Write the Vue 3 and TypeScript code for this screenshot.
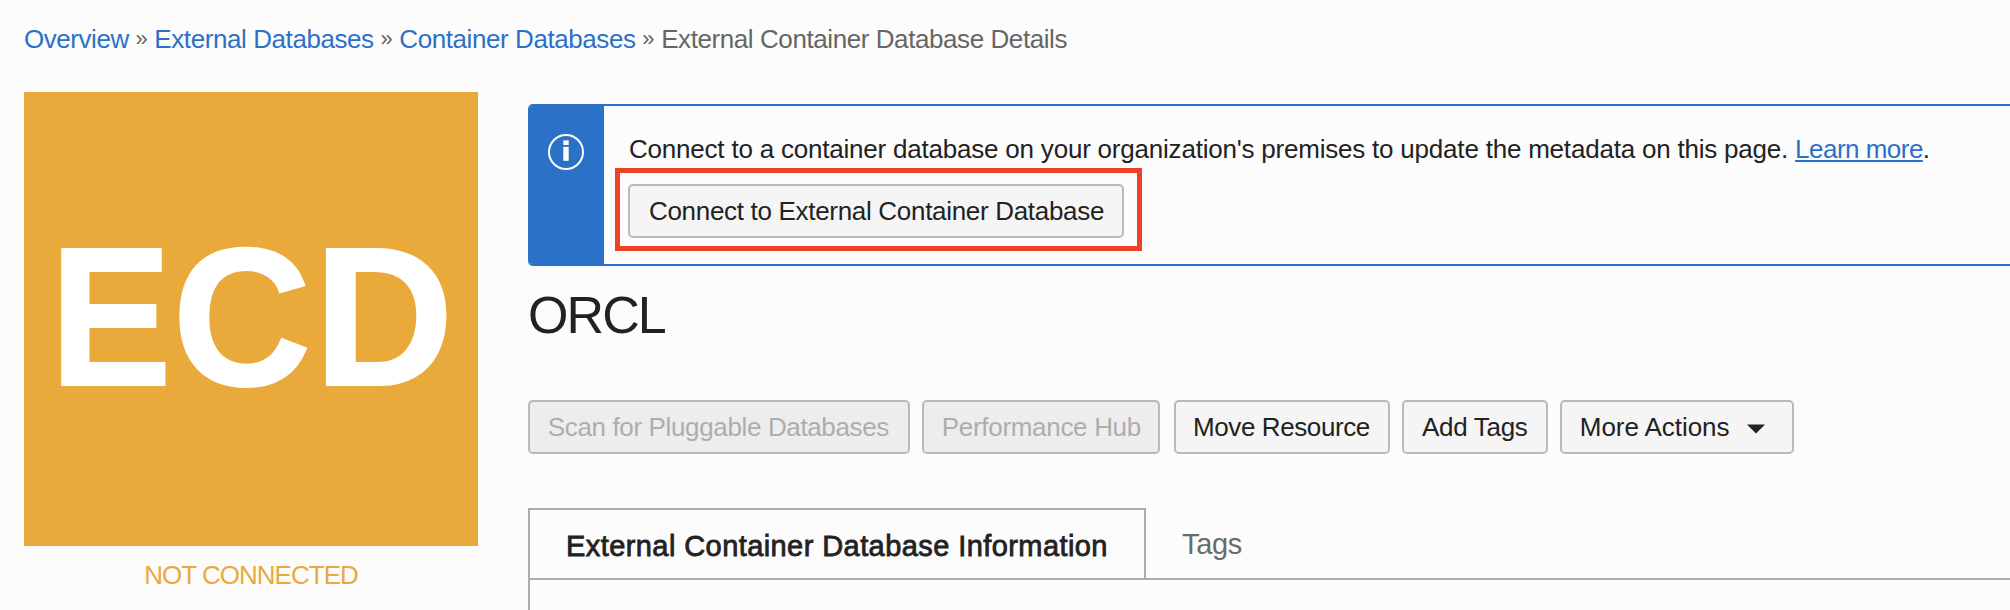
<script setup lang="ts">
interface Crumb {
  label: string
  kind: string
  link: boolean
}

interface Action {
  label: string
  kind: string
  disabled?: boolean
  menu?: boolean
}

const crumbs: Crumb[] = [
  { label: 'Overview', kind: 'overview', link: true },
  { label: 'External Databases', kind: 'external', link: true },
  { label: 'Container Databases', kind: 'container', link: true },
  { label: 'External Container Database Details', kind: 'current', link: false },
]

const actions: Action[] = [
  { label: 'Scan for Pluggable Databases', kind: 'scan', disabled: true },
  { label: 'Performance Hub', kind: 'hub', disabled: true },
  { label: 'Move Resource', kind: 'move' },
  { label: 'Add Tags', kind: 'tags' },
  { label: 'More Actions', kind: 'more', menu: true },
]
</script>

<template>
  <div class="page">
    <nav class="crumbs">
      <template v-for="(crumb, i) in crumbs" :key="crumb.kind">
        <span v-if="i > 0" class="sep">»</span>
        <a v-if="crumb.link" :class="['crumb', crumb.kind]">{{ crumb.label }}</a>
        <span v-else :class="['crumb', crumb.kind]">{{ crumb.label }}</span>
      </template>
    </nav>

    <div class="body">
      <aside class="side">
        <div class="tile"><span class="e">E</span><span class="c">C</span><span class="d">D</span></div>
        <div class="status">NOT CONNECTED</div>
      </aside>

      <main class="main">
        <section class="banner">
          <div class="stripe">
            <svg width="36" height="36" viewBox="0 0 36 36">
              <circle cx="18" cy="18" r="17" fill="none" stroke="#fff" stroke-width="2" />
              <rect x="15.3" y="6.4" width="5.4" height="4.6" fill="#fff" />
              <rect x="15.3" y="12.8" width="5.4" height="14" fill="#fff" />
            </svg>
          </div>
          <div class="notice">
            <p class="message"><span class="sentence">Connect to a container database on your organization's premises to update the metadata on this page. </span><a class="learn">Learn more</a>.</p>
            <div class="highlight">
              <button class="btn connect">Connect to External Container Database</button>
            </div>
          </div>
        </section>

        <h1 class="title">ORCL</h1>

        <div class="actions">
          <button v-for="a in actions" :key="a.kind" :class="['btn', a.kind]" :disabled="a.disabled">
            {{ a.label }}
            <svg v-if="a.menu" class="caret" width="18" height="10" viewBox="0 0 18 10">
              <path d="M0 0.4H18L9 9.6Z" fill="#222" />
            </svg>
          </button>
        </div>

        <div class="tabs">
          <div class="tab active">External Container Database Information</div>
          <div class="tab">Tags</div>
        </div>
        <div class="panel"></div>
      </main>
    </div>
  </div>
</template>

<style>
body {
  background: #fcfcfc;
}
</style>

<style scoped>
.page {
  box-sizing: border-box;
  width: 2010px;
  height: 610px;
  overflow: hidden;
  padding-top: 24px;
  background: #fcfcfc;
  color: #222;
  font: 26px/30px "Liberation Sans", Arial, sans-serif;
}

.crumbs {
  display: flex;
  height: 68px;
  padding-left: 24px;
  color: #666;
  white-space: nowrap;
}

.crumbs a {
  color: #2b71c7;
}

.sep {
  width: 25.6px;
  text-align: center;
  font-size: 22px;
}

.overview {
  letter-spacing: -0.45px;
}

.external,
.container,
.current {
  letter-spacing: -0.42px;
}

.body {
  display: flex;
  gap: 50px;
  padding-left: 24px;
}

.side {
  flex: none;
  width: 454px;
}

.tile {
  box-sizing: border-box;
  display: flex;
  height: 454px;
  padding: 115px 0 0 25px;
  background: #eaa93b;
  color: #fff;
  font-size: 196px;
  font-weight: 700;
  line-height: 222px;
  -webkit-text-stroke: 2px #fff;
}

.tile .e {
  width: 122px;
  transform: scaleX(0.93);
  transform-origin: 13px 0;
}

.tile .c {
  width: 142px;
  transform: scaleX(0.98);
}

.tile .d {
  transform: scaleX(0.985);
}

.status {
  margin-top: 14px;
  color: #eaa93b;
  letter-spacing: -0.97px;
  text-align: center;
}

.main {
  flex: 1;
  min-width: 0;
}

.banner {
  box-sizing: border-box;
  display: flex;
  height: 162px;
  margin-top: 12px;
  border: solid #2b71c7;
  border-width: 2px 0;
  border-radius: 5px 0 0 5px;
  overflow: hidden;
}

.stripe {
  box-sizing: border-box;
  width: 76px;
  padding: 28px 20px;
  background: #2b71c7;
}

.stripe svg {
  display: block;
}

.notice {
  flex: 1;
  padding: 28px 0 0 11px;
}

.message {
  margin: 0 0 0 14px;
  white-space: nowrap;
}

.sentence {
  letter-spacing: -0.21px;
  white-space: pre;
}

.learn {
  color: #2b71c7;
  letter-spacing: -0.52px;
  text-decoration: underline;
  text-decoration-thickness: 2px;
  text-decoration-skip-ink: none;
  text-underline-offset: 2px;
}

.highlight {
  box-sizing: border-box;
  width: 527px;
  height: 83px;
  margin-top: 4px;
  padding: 11px 0 0 8px;
  border: 5px solid #ee4126;
}

.btn {
  box-sizing: border-box;
  display: flex;
  align-items: center;
  flex: none;
  height: 54px;
  margin: 0;
  padding: 0 0 0 17.8px;
  border: 2px solid #b4bac0;
  border-radius: 5px;
  background: #f5f5f5;
  color: #222;
  font: inherit;
  white-space: nowrap;
}

.btn:disabled {
  background: #ededed;
  color: #adadad;
}

.connect {
  width: 496px;
  padding-left: 19px;
  letter-spacing: -0.31px;
}

.title {
  margin: 19px 0 0;
  font-size: 52px;
  font-weight: 400;
  line-height: 60px;
  letter-spacing: -1.9px;
}

.actions {
  display: flex;
  gap: 12px;
  margin-top: 55px;
}

.scan {
  width: 382px;
  letter-spacing: -0.36px;
}

.hub {
  width: 238px;
  letter-spacing: -0.31px;
}

.move {
  width: 216px;
  margin-left: 2px;
  padding-left: 17px;
  letter-spacing: -0.4px;
}

.tags {
  width: 146px;
  padding-left: 18px;
  letter-spacing: -0.3px;
}

.more {
  width: 234px;
  letter-spacing: -0.05px;
}

.caret {
  margin: 3px 0 0 17.5px;
}

.tabs {
  display: flex;
  height: 72px;
  margin-top: 54px;
  box-sizing: border-box;
  border-bottom: 2px solid #adadad;
  font-size: 29px;
  line-height: 34px;
}

.tab {
  box-sizing: border-box;
  padding: 19px 0 0 36px;
  color: #6a6a6a;
  letter-spacing: -0.3px;
}

.tab.active {
  width: 618px;
  padding: 19px 0 0 36px;
  border: solid #adadad;
  border-width: 2px 2px 0;
  color: #222;
  letter-spacing: 0.42px;
  -webkit-text-stroke: 0.8px #222;
  white-space: nowrap;
}

.panel {
  height: 60px;
  border-left: 2px solid #adadad;
}
</style>
